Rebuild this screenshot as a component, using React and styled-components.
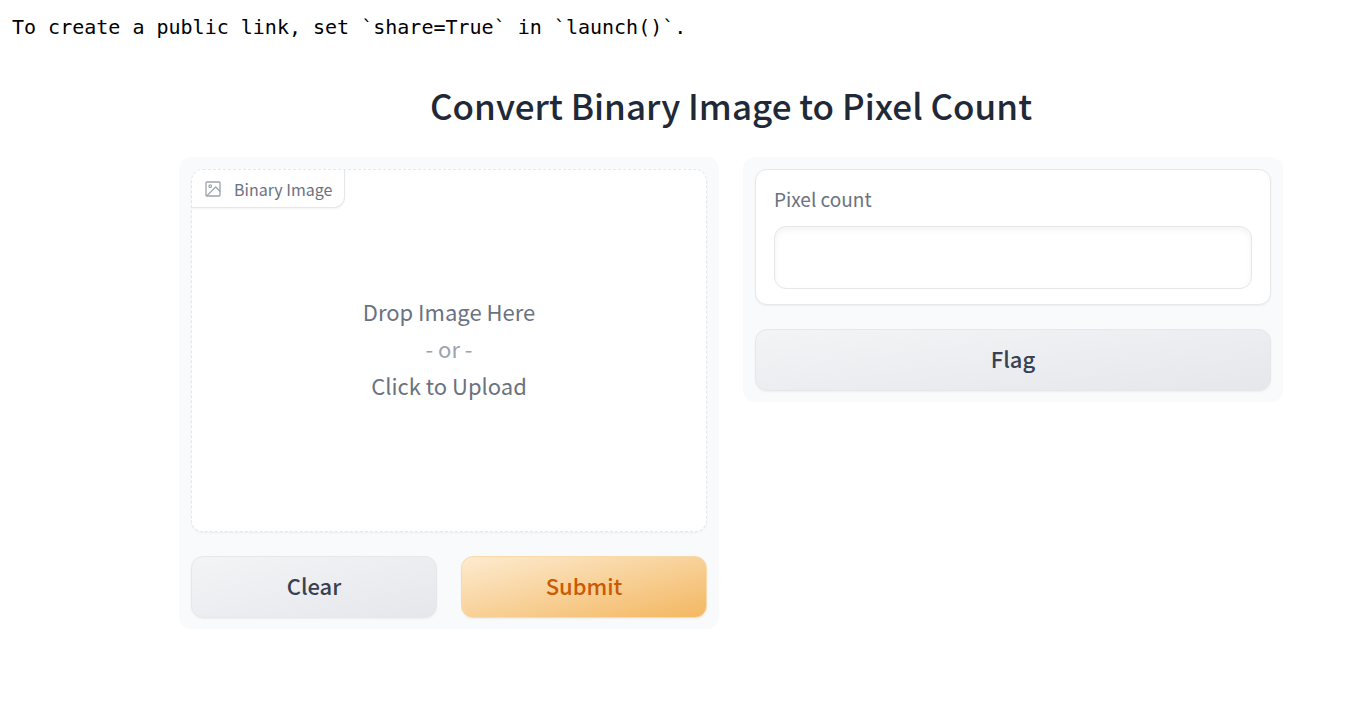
import React from "react";
import styled, { createGlobalStyle } from "styled-components";

const GlobalStyle = createGlobalStyle`
  * { box-sizing: border-box; }
  body {
    margin: 0;
    background: #ffffff;
    color: #1f2937;
    font-family: "Noto Sans CJK SC", "Open Sans", sans-serif;
  }
  button, input { font-family: inherit; }
`;

const Page = styled.div`
  display: flex;
  flex-direction: column;
`;

const LogLine = styled.pre`
  margin: 0;
  padding: 15px 12px 0;
  color: #000000;
  font: 20px/24px "DejaVu Sans Mono", monospace;
  white-space: pre-wrap;
`;

const Main = styled.main`
  padding: 42px 63px 24px 179px;
`;

const Title = styled.h1`
  margin: 0 0 28px;
  font-size: 35px;
  line-height: 48px;
  font-weight: 500;
  text-align: center;
`;

const Columns = styled.div`
  display: flex;
  align-items: flex-start;
  gap: 24px;
`;

const Panel = styled.section`
  flex: 1 1 0;
  min-width: 0;
  display: flex;
  flex-direction: column;
  gap: 24px;
  padding: 12px 12px 11px;
  border-radius: 12px;
  background: #f9fafb;
`;

const DropZone = styled.div`
  position: relative;
  display: flex;
  height: 363px;
  border: 1px dashed #e5e7eb;
  border-radius: 12px;
  background: #ffffff;
  box-shadow: 0 1px 2px rgba(0, 0, 0, 0.05);
`;

const ZoneLabel = styled.div`
  position: absolute;
  top: 0;
  left: 0;
  display: flex;
  align-items: center;
  gap: 13px;
  height: 38px;
  padding: 0 12px 0 13px;
  border: 1px solid #e5e7eb;
  border-width: 0 1px 1px 0;
  border-radius: 11px 0 11px 0;
  background: #ffffff;
  box-shadow: 0 1px 2px rgba(0, 0, 0, 0.05);
  color: #6b7280;
  font-size: 16px;
  line-height: 24px;
  white-space: nowrap;

  svg { color: #9ca3af; }
`;

const UploadButton = styled.button`
  flex: 1;
  display: flex;
  flex-direction: column;
  align-items: center;
  justify-content: center;
  padding: 0 0 4px;
  border: 0;
  border-radius: 12px;
  background: transparent;
  color: #6b7280;
  font-size: 22px;
  line-height: 37px;
  cursor: pointer;
`;

const Or = styled.span`
  color: #9ca3af;
`;

const ButtonRow = styled.div`
  display: flex;
  gap: 24px;
`;

const Button = styled.button`
  flex: 1 1 0;
  min-height: 62px;
  padding: 10px 24px 14px;
  border: 1px solid ${(p) => (p.$primary ? "#f9d9a8" : "#e5e7eb")};
  border-radius: 12px;
  background: ${(p) =>
    p.$primary
      ? "linear-gradient(to bottom right, #fdebd0, #f3b761)"
      : "linear-gradient(to bottom right, #f3f4f6, #e5e7eb)"};
  box-shadow: 0 1px 2px rgba(0, 0, 0, 0.05);
  color: ${(p) => (p.$primary ? "#ca5a04" : "#374151")};
  font-size: 22px;
  line-height: 36px;
  font-weight: 500;
  cursor: pointer;
`;

const Card = styled.div`
  display: flex;
  flex-direction: column;
  gap: 12px;
  padding: 13px 18px 15px;
  border: 1px solid #e5e7eb;
  border-radius: 12px;
  background: #ffffff;
  box-shadow: 0 1px 2px rgba(0, 0, 0, 0.05);
`;

const FieldLabel = styled.label`
  color: #6b7280;
  font-size: 19px;
  line-height: 31px;
`;

const TextInput = styled.input`
  width: 100%;
  height: 63px;
  padding: 15px;
  border: 1px solid #e5e7eb;
  border-radius: 12px;
  background: #ffffff;
  box-shadow: inset 0 3px 6px rgba(0, 0, 0, 0.05);
  color: #1f2937;
  font-size: 22px;
`;

const ImageIcon = () => (
  <svg
    width="16"
    height="16"
    viewBox="0 0 16 16"
    fill="none"
    stroke="currentColor"
    strokeLinecap="round"
    strokeLinejoin="round"
    aria-hidden="true"
  >
    <rect x="1" y="1" width="14" height="14" rx="1" strokeWidth="1.3" />
    <circle cx="5.2" cy="5.2" r="1.3" strokeWidth="1.2" />
    <path d="M15 10.3L10.6 6L2 14.6" strokeWidth="1.3" />
  </svg>
);

export default function App() {
  return (
    <Page>
      <GlobalStyle />
      <LogLine>{"To create a public link, set `share=True` in `launch()`."}</LogLine>
      <Main>
        <Title>Convert Binary Image to Pixel Count</Title>
        <Columns>
          <Panel>
            <DropZone>
              <UploadButton type="button">
                <span>Drop Image Here</span>
                <Or>- or -</Or>
                <span>Click to Upload</span>
              </UploadButton>
              <ZoneLabel>
                <ImageIcon />
                Binary Image
              </ZoneLabel>
            </DropZone>
            <ButtonRow>
              <Button type="button">Clear</Button>
              <Button type="button" $primary>Submit</Button>
            </ButtonRow>
          </Panel>
          <Panel>
            <Card>
              <FieldLabel htmlFor="pixel-count">Pixel count</FieldLabel>
              <TextInput id="pixel-count" type="text" />
            </Card>
            <Button type="button">Flag</Button>
          </Panel>
        </Columns>
      </Main>
    </Page>
  );
}
